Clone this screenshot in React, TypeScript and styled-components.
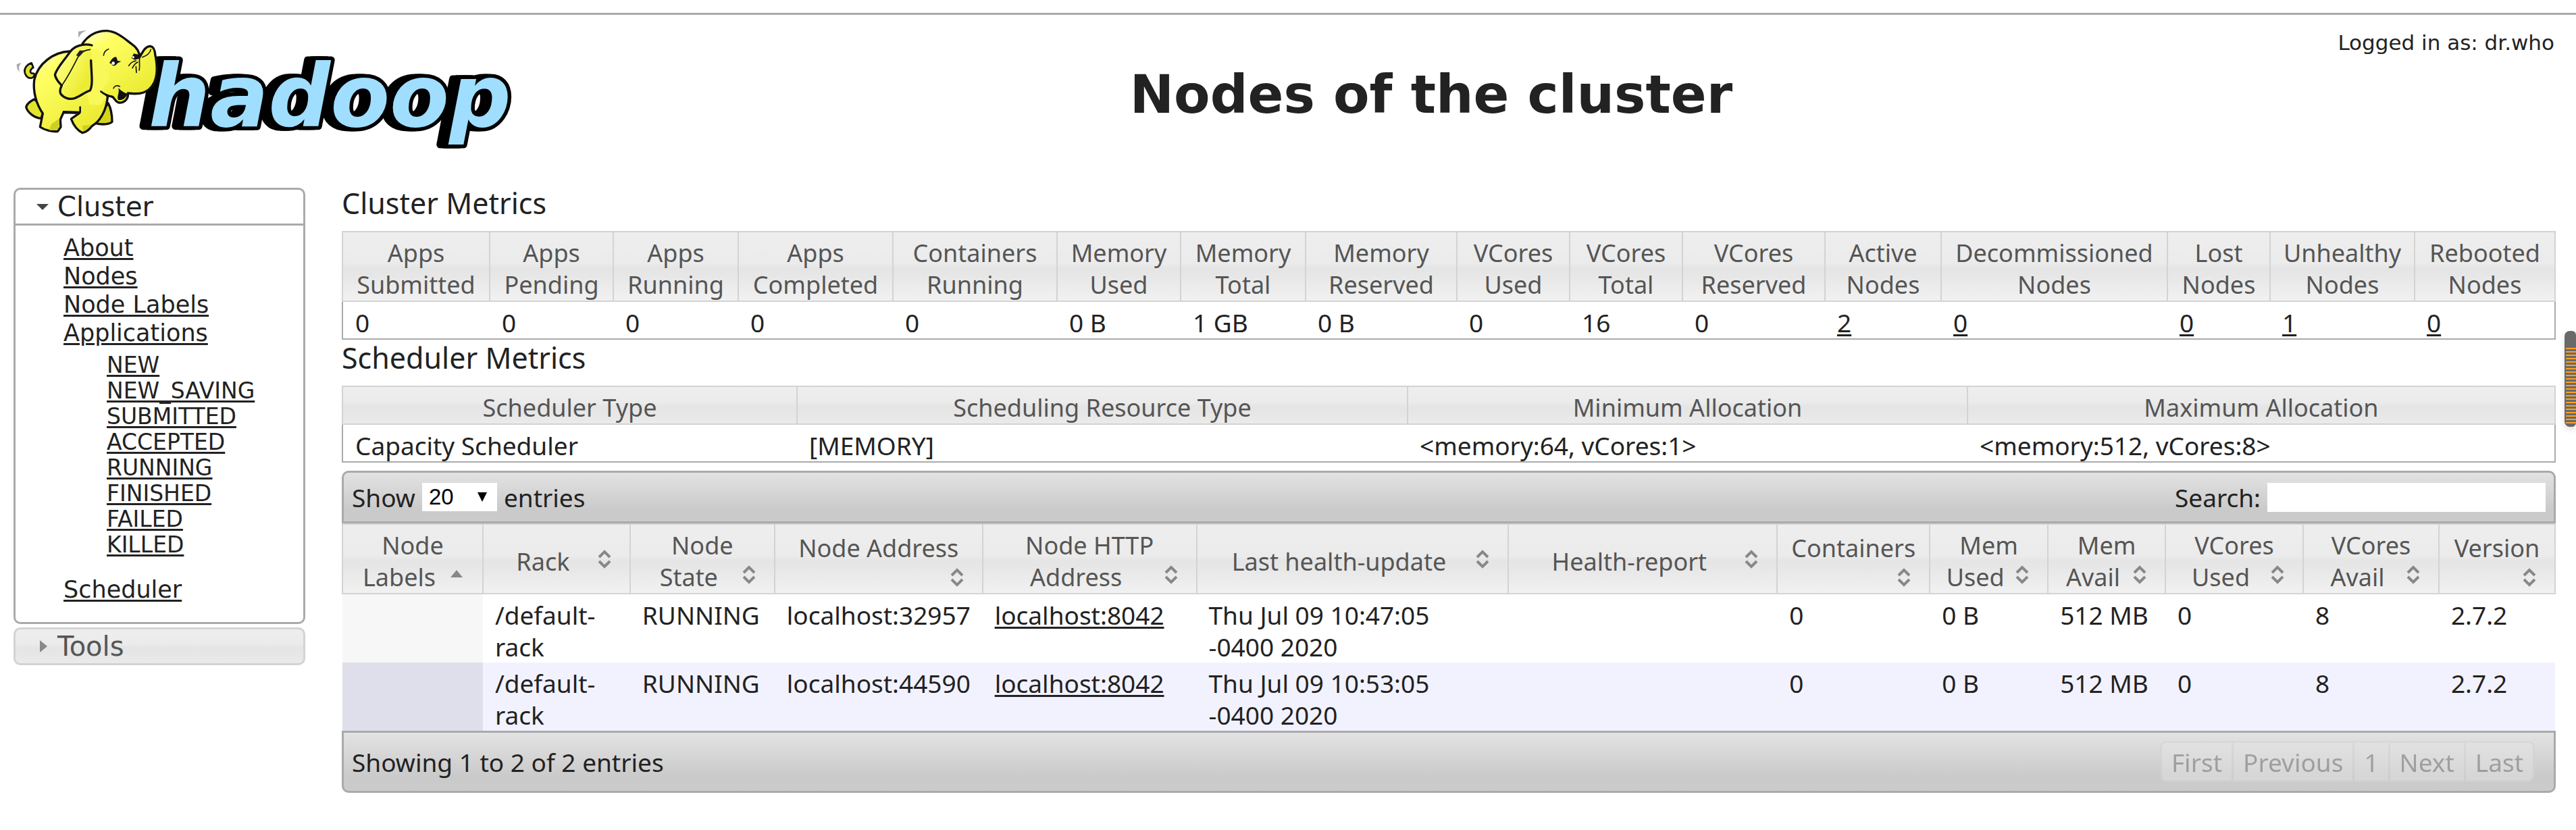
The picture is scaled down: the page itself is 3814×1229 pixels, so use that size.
import React from "react";
import styled, { createGlobalStyle, css } from "styled-components";

const UI_FONT = '"Noto Sans", "Noto Sans CJK SC", sans-serif';
const NAV_FONT = '"DejaVu Sans", sans-serif';

const color = {
  text: "#222222",
  muted: "#555555",
  border: "#aaaaaa",
  softBorder: "#d3d3d3",
};

const GlobalStyle = createGlobalStyle`
  *, *::before, *::after { box-sizing: border-box; }
  body {
    margin: 0;
    background: #ffffff;
    color: ${color.text};
    font-family: ${UI_FONT};
    font-size: 37px;
    line-height: 47px;
  }
`;

const glass = css`
  background: linear-gradient(
    #eeeeee,
    #ebebeb calc(50% - 4px),
    #e5e5e5 calc(50% + 2px),
    #e6e6e6 calc(50% + 10px),
    #f1f1f1 calc(50% + 50px)
  );
`;

const Page = styled.div`
  position: relative;
  padding-top: 19px;
`;

/* ---------- header ---------- */

const Header = styled.header`
  display: grid;
  grid-template-columns: 424px 1fr;
  height: 259px;
  border-top: 3px solid ${color.border};
  font-family: ${NAV_FONT};
`;

const LogoLink = styled.a`
  grid-area: 1 / 1 / 2 / 3;
  justify-self: start;
`;

const LogoArt = styled.svg`
  display: block;
  width: 780px;
  height: 214px;
`;

const LogoWord = styled.text`
  font: italic bold 128px "DejaVu Sans", sans-serif;
  fill: #a0deff;
  stroke: #000000;
  stroke-width: 11px;
  stroke-linejoin: round;
  paint-order: stroke;
  filter: drop-shadow(-6px 0 0 #000000) drop-shadow(-6px 0 0 #000000);
`;

const Title = styled.h1`
  grid-area: 1 / 2;
  margin: 71px 0 0;
  text-align: center;
  font-size: 78px;
  line-height: 94px;
  font-weight: bold;
`;

const Login = styled.div`
  grid-area: 1 / 2;
  justify-self: end;
  align-self: start;
  padding: 23px 32px 0 0;
  font-size: 31px;
  line-height: 36px;
`;

/* ---------- layout ---------- */

const Layout = styled.div`
  display: grid;
  grid-template-columns: 432px minmax(0, 1fr);
  column-gap: 54px;
  align-items: start;
  padding: 0 30px 50px 20px;
`;

/* ---------- sidebar ---------- */

const Sidebar = styled.nav`
  display: flex;
  flex-direction: column;
  gap: 5px;
  font-family: ${NAV_FONT};
  font-size: 35px;
  line-height: 42px;
`;

const NavHeader = styled.button<{ $open?: boolean }>`
  display: flex;
  align-items: center;
  gap: 2px;
  width: 100%;
  height: 56px;
  padding: 0 20px;
  border: 3px solid ${(p) => (p.$open ? color.border : color.softBorder)};
  border-radius: ${(p) => (p.$open ? "10px 10px 0 0" : "10px")};
  color: ${(p) => (p.$open ? color.text : color.muted)};
  font-family: inherit;
  font-size: 40px;
  line-height: 50px;
  text-align: left;
  ${(p) => (p.$open ? "background: #ffffff;" : glass)}
`;

const Icon = styled.svg`
  display: block;
  flex: none;
  width: 40px;
  height: 40px;
`;

const NavPanel = styled.div`
  padding: 12px 20px 27px 71px;
  border: 3px solid ${color.border};
  border-top: 0;
  border-radius: 0 0 10px 10px;
`;

const NavList = styled.ul`
  margin: 0;
  padding: 0;
  list-style: none;
`;

const SubList = styled(NavList)`
  padding: 8px 0 26px 64px;
  font-size: 33px;
  line-height: 38px;
`;

const TextLink = styled.a`
  color: inherit;
  text-decoration: underline;
  text-decoration-thickness: 3px;
  text-underline-offset: 3px;
`;

/* ---------- tables ---------- */

const Main = styled.main`
  display: flex;
  flex-direction: column;
`;

const MetricsHeading = styled.h2`
  margin: 0;
  padding-bottom: 18px;
  font-size: 43px;
  line-height: 46px;
  font-weight: normal;

  table + & {
    padding-top: 4px;
  }
`;

const Table = styled.table<{ $framed?: boolean }>`
  width: 100%;
  table-layout: fixed;
  border-collapse: collapse;
  ${(p) => p.$framed && `border: 2px solid ${color.border};`}
`;

const Col = styled.col<{ $share: number }>`
  width: ${(p) => p.$share}%;
`;

const HeadCell = styled.th`
  padding: 7px 17px 0;
  border: 2px solid ${color.softBorder};
  color: ${color.muted};
  font-size: 36px;
  font-weight: normal;
  text-align: center;
  vertical-align: middle;
  ${glass}
`;

const Cell = styled.td`
  padding: 7px 17px 0 18px;
  vertical-align: top;
`;

const NodeRow = styled.tr`
  & > td:first-child {
    background: #f7f7f7;
  }
  &:nth-child(even) > td {
    background: #f2f2ff;
  }
  &:nth-child(even) > td:first-child {
    background: #dfdfeb;
  }
`;

const SortIcon = styled(Icon)`
  float: right;
`;

/* ---------- toolbars around the node list ---------- */

const Toolbar = styled.div<{ $position: "top" | "bottom" }>`
  display: flex;
  align-items: center;
  justify-content: space-between;
  border: 3px solid ${color.border};
  background: linear-gradient(#e3e3e3, #e0e0e0 8%, #cacaca 75%, #cbcbcb);
  ${(p) =>
    p.$position === "top"
      ? "height: 78px; margin-top: 12px; padding: 0 12px; border-radius: 10px 10px 0 0;"
      : "height: 92px; padding: 0 28px 0 12px; border-radius: 0 0 10px 10px;"}
`;

const Field = styled.label`
  display: flex;
  align-items: center;
  gap: 10px;
`;

const SelectBox = styled.span`
  position: relative;
  display: flex;
`;

const LengthSelect = styled.select`
  appearance: none;
  width: 111px;
  height: 42px;
  padding: 0 10px;
  border: 0;
  border-radius: 0;
  background: #ffffff;
  color: #000000;
  font: 33px/42px "Liberation Sans", sans-serif;
`;

const SelectArrow = styled.svg`
  position: absolute;
  top: 13px;
  right: 14px;
  width: 16px;
  height: 16px;
  pointer-events: none;
`;

const SearchInput = styled.input`
  width: 412px;
  height: 43px;
  padding: 0 8px;
  border: 0;
  background: #ffffff;
  font: 33px/42px "Liberation Sans", sans-serif;
`;

const Pager = styled.div`
  display: flex;
  opacity: 0.4;
`;

const PageButton = styled.button`
  height: 62px;
  padding: 0 14px;
  border: 3px solid ${color.softBorder};
  border-right-width: 0;
  background: #e9e9e9;
  color: ${color.muted};
  font-family: inherit;
  font-size: 37px;
  line-height: 47px;

  &:first-child {
    border-radius: 10px 0 0 10px;
  }
  &:last-child {
    border-right-width: 3px;
    border-radius: 0 10px 10px 0;
  }
`;

const ScrollMarker = styled.div`
  position: absolute;
  top: 490px;
  right: 0;
  width: 17px;
  height: 142px;
  padding: 25px 0 3px 2px;
  border-radius: 8px 6px 6px 8px;
  background: #696969;
  box-shadow: 0 4px 10px rgba(0, 0, 0, 0.12);

  &::before {
    content: "";
    display: block;
    height: 100%;
    background: linear-gradient(#faa123 2px, transparent 2px) 0 0 / 100% 5px;
  }
`;

/* ---------- data ---------- */

type Column = { label: string; size: number };

const clusterColumns: Column[] = [
  { label: "Apps Submitted", size: 218 },
  { label: "Apps Pending", size: 183 },
  { label: "Apps Running", size: 185 },
  { label: "Apps Completed", size: 229 },
  { label: "Containers Running", size: 243 },
  { label: "Memory Used", size: 183 },
  { label: "Memory Total", size: 185 },
  { label: "Memory Reserved", size: 224 },
  { label: "VCores Used", size: 167 },
  { label: "VCores Total", size: 167 },
  { label: "VCores Reserved", size: 211 },
  { label: "Active Nodes", size: 172 },
  { label: "Decommissioned Nodes", size: 335 },
  { label: "Lost Nodes", size: 152 },
  { label: "Unhealthy Nodes", size: 214 },
  { label: "Rebooted Nodes", size: 208 },
];
const clusterValues = ["0", "0", "0", "0", "0", "0 B", "1 GB", "0 B", "0", "16", "0", "2", "0", "0", "1", "0"];
const FIRST_LINKED_METRIC = 11;

const schedulerColumns: Column[] = [
  { label: "Scheduler Type", size: 673 },
  { label: "Scheduling Resource Type", size: 904 },
  { label: "Minimum Allocation", size: 829 },
  { label: "Maximum Allocation", size: 870 },
];
const schedulerValues = ["Capacity Scheduler", "[MEMORY]", "<memory:64, vCores:1>", "<memory:512, vCores:8>"];

const nodeColumns: Column[] = [
  { label: "Node Labels", size: 208 },
  { label: "Rack", size: 218 },
  { label: "Node State", size: 214 },
  { label: "Node Address", size: 308 },
  { label: "Node HTTP Address", size: 317 },
  { label: "Last health-update", size: 462 },
  { label: "Health-report", size: 398 },
  { label: "Containers", size: 226 },
  { label: "Mem Used", size: 175 },
  { label: "Mem Avail", size: 174 },
  { label: "VCores Used", size: 204 },
  { label: "VCores Avail", size: 201 },
  { label: "Version", size: 172 },
];
const nodes = [
  { address: "localhost:32957", updated: ["Thu Jul 09 10:47:05", "-0400 2020"] },
  { address: "localhost:44590", updated: ["Thu Jul 09 10:53:05", "-0400 2020"] },
];

const appStates = ["NEW", "NEW_SAVING", "SUBMITTED", "ACCEPTED", "RUNNING", "FINISHED", "FAILED", "KILLED"];

/* ---------- parts ---------- */

function Columns({ columns }: { columns: Column[] }) {
  const total = columns.reduce((sum, c) => sum + c.size, 0);
  return (
    <colgroup>
      {columns.map((c) => (
        <Col key={c.label} $share={(c.size / total) * 100} />
      ))}
    </colgroup>
  );
}

function Logo() {
  return (
    <LogoArt viewBox="0 22 780 214" role="img" aria-label="hadoop">
      <defs>
        <linearGradient id="skin" x1="0" y1="0" x2="0.7" y2="1">
          <stop offset="0" stopColor="#ffffd8" />
          <stop offset="0.25" stopColor="#ffff66" />
          <stop offset="1" stopColor="#eaea30" />
        </linearGradient>
        <linearGradient id="earSkin" x1="0" y1="0" x2="0.8" y2="0.7">
          <stop offset="0.1" stopColor="#ffffe6" />
          <stop offset="0.45" stopColor="#fbfb6a" />
          <stop offset="1" stopColor="#ecec34" />
        </linearGradient>
      </defs>
      <LogoWord x="220" y="187">hadoop</LogoWord>

      <g transform="translate(16 32) scale(0.33333)" stroke="#111" strokeWidth="10" strokeLinejoin="round" strokeLinecap="round">
        <path d="M103 345 C85 355 70 368 68 380 C75 405 105 428 135 430 L150 380Z" fill="#e4e42c" />
        <path d="M432 362 C445 385 450 420 450 445 C440 458 400 458 378 452 L405 400Z" fill="#d4d41c" />
        <path d="M92 184 C72 190 58 208 62 226 C68 248 84 256 98 248 C108 240 106 228 98 230 C84 232 82 214 100 204Z" fill="#e0e02c" strokeWidth="8" />
        <path
          d="M262 132 C190 135 120 185 104 260 C98 310 112 365 142 408 L130 468 C150 482 185 490 208 488 L222 468 L220 435 L234 404 L305 406 L268 432 C280 465 300 485 318 494 C335 490 350 478 360 464 C395 445 425 395 430 335 L400 200Z"
          fill="url(#skin)"
        />
        <path d="M234 400 L308 402 L308 380" fill="none" strokeWidth="8" />
        <path d="M180 455 L170 482 L207 482 L216 460 L216 430Z M318 462 L322 488 C340 480 352 465 360 458Z" fill="#cfcf20" stroke="none" />
        <path
          d="M318 98 C345 60 385 40 428 41 C475 45 510 80 535 98 C560 115 572 135 572 158 L590 128 C600 115 612 108 622 110 C636 112 640 130 642 150 C652 200 652 240 636 272 C612 318 575 325 520 318 C524 350 495 366 475 358 C462 352 460 340 452 334 C430 330 412 322 400 310 L375 320 L330 200Z"
          fill="url(#skin)"
        />
        <path d="M322 112 L300 180 L350 370 L400 370 L424 336 L405 306 L440 250 L400 130Z" fill="#f8f858" stroke="none" />
        <path d="M400 310 C412 322 430 330 452 334" fill="none" strokeWidth="8" />
        <path d="M360 105 C320 95 280 110 262 136 C235 175 205 205 196 236 C200 258 215 272 226 284 C218 300 218 314 222 322 C236 340 262 348 285 340 C308 332 330 312 352 306 C366 280 358 230 356 172" fill="url(#earSkin)" />
        <path d="M226 284 C245 258 270 215 306 142 M300 150 C315 132 332 126 352 124" fill="none" strokeWidth="5" />
        <path d="M290 150 L306 128 L330 128 L304 156Z" fill="#222" stroke="none" />
        <path d="M412 150 C414 136 422 126 434 122" fill="none" strokeWidth="5" />
        <path d="M438 184 C450 160 466 152 470 160 L474 174 L490 176 L472 186 C466 198 452 200 448 188Z" fill="#151515" stroke="none" />
        <circle cx="455" cy="185" r="7" fill="#fff" stroke="none" />
        <path d="M536 162 L546 142 L566 146 L572 164 L550 170Z" fill="#151515" stroke="none" />
        <circle cx="544" cy="158" r="5" fill="#fff" stroke="none" />
        <path d="M524 196 C532 182 545 176 556 174 M540 206 C546 194 554 184 564 180 M558 226 L556 200 M572 160 C570 180 574 200 570 216 M584 158 C602 152 618 140 622 124" fill="none" strokeWidth="5" />
        <path d="M456 296 C462 284 472 282 484 288" fill="none" strokeWidth="5" />
        <path d="M478 294 C490 308 500 314 518 320 C514 338 494 352 478 348 C468 336 484 318 478 294Z" fill="#111" stroke="none" />
        <path d="M300 44 L336 38 L314 52 L300 72Z M26 190 L46 182 L36 200 L38 224 L28 208Z" fill="#a8a8a8" stroke="none" />
      </g>
    </LogoArt>
  );
}

function SortMark({ active }: { active?: boolean }) {
  return (
    <SortIcon viewBox="0 0 40 40" aria-hidden="true">
      {active ? (
        <path d="M10 24 L19 13 L28 24Z" fill="#888888" />
      ) : (
        <path d="M12 17 L20 9 L28 17 M12 23 L20 31 L28 23" fill="none" stroke="#888888" strokeWidth="4" />
      )}
    </SortIcon>
  );
}

export default function App() {
  return (
    <Page>
      <GlobalStyle />
      <Header>
        <LogoLink href="#home">
          <Logo />
        </LogoLink>
        <Title>Nodes of the cluster</Title>
        <Login>Logged in as: dr.who</Login>
      </Header>

      <Layout>
        <Sidebar>
          <div>
            <NavHeader type="button" $open aria-expanded="true">
              <Icon viewBox="0 0 40 40" aria-hidden="true">
                <path d="M11 16 H29 L20 25Z" fill="#444444" />
              </Icon>
              Cluster
            </NavHeader>
            <NavPanel>
              <NavList>
                <li><TextLink href="#about">About</TextLink></li>
                <li><TextLink href="#nodes">Nodes</TextLink></li>
                <li><TextLink href="#labels">Node Labels</TextLink></li>
                <li>
                  <TextLink href="#apps">Applications</TextLink>
                  <SubList>
                    {appStates.map((s) => (
                      <li key={s}><TextLink href={`#${s}`}>{s}</TextLink></li>
                    ))}
                  </SubList>
                </li>
                <li><TextLink href="#scheduler">Scheduler</TextLink></li>
              </NavList>
            </NavPanel>
          </div>
          <NavHeader type="button" aria-expanded="false">
            <Icon viewBox="0 0 40 40" aria-hidden="true">
              <path d="M16 11 V29 L27 20Z" fill="#888888" />
            </Icon>
            Tools
          </NavHeader>
        </Sidebar>

        <Main>
          <MetricsHeading>Cluster Metrics</MetricsHeading>
          <Table $framed>
            <Columns columns={clusterColumns} />
            <thead>
              <tr>{clusterColumns.map((c) => <HeadCell key={c.label}>{c.label}</HeadCell>)}</tr>
            </thead>
            <tbody>
              <tr>
                {clusterValues.map((v, i) => (
                  <Cell key={clusterColumns[i].label}>
                    {i >= FIRST_LINKED_METRIC ? <TextLink href="#nodes">{v}</TextLink> : v}
                  </Cell>
                ))}
              </tr>
            </tbody>
          </Table>

          <MetricsHeading>Scheduler Metrics</MetricsHeading>
          <Table $framed>
            <Columns columns={schedulerColumns} />
            <thead>
              <tr>{schedulerColumns.map((c) => <HeadCell key={c.label}>{c.label}</HeadCell>)}</tr>
            </thead>
            <tbody>
              <tr>{schedulerValues.map((v) => <Cell key={v}>{v}</Cell>)}</tr>
            </tbody>
          </Table>

          <Toolbar $position="top">
            <Field>
              Show
              <SelectBox>
                <LengthSelect defaultValue="20" aria-label="Entries per page">
                  <option>20</option>
                  <option>40</option>
                  <option>60</option>
                  <option>80</option>
                  <option>100</option>
                </LengthSelect>
                <SelectArrow viewBox="0 0 16 16" aria-hidden="true">
                  <path d="M1 1 H15 L8 15Z" fill="#000000" />
                </SelectArrow>
              </SelectBox>
              entries
            </Field>
            <Field>
              Search:
              <SearchInput type="text" />
            </Field>
          </Toolbar>
          <Table>
            <Columns columns={nodeColumns} />
            <thead>
              <tr>
                {nodeColumns.map((c, i) => (
                  <HeadCell key={c.label} aria-sort={i === 0 ? "ascending" : undefined}>
                    {c.label}
                    <SortMark active={i === 0} />
                  </HeadCell>
                ))}
              </tr>
            </thead>
            <tbody>
              {nodes.map((n) => (
                <NodeRow key={n.address}>
                  <Cell />
                  <Cell>/default-rack</Cell>
                  <Cell>RUNNING</Cell>
                  <Cell>{n.address}</Cell>
                  <Cell><TextLink href="#node">localhost:8042</TextLink></Cell>
                  <Cell>{n.updated[0]}<br />{n.updated[1]}</Cell>
                  <Cell />
                  <Cell>0</Cell>
                  <Cell>0 B</Cell>
                  <Cell>512 MB</Cell>
                  <Cell>0</Cell>
                  <Cell>8</Cell>
                  <Cell>2.7.2</Cell>
                </NodeRow>
              ))}
            </tbody>
          </Table>
          <Toolbar $position="bottom">
            <span>Showing 1 to 2 of 2 entries</span>
            <Pager>
              {["First", "Previous", "1", "Next", "Last"].map((p) => (
                <PageButton key={p} type="button" disabled>{p}</PageButton>
              ))}
            </Pager>
          </Toolbar>
        </Main>
      </Layout>
      <ScrollMarker />
    </Page>
  );
}
